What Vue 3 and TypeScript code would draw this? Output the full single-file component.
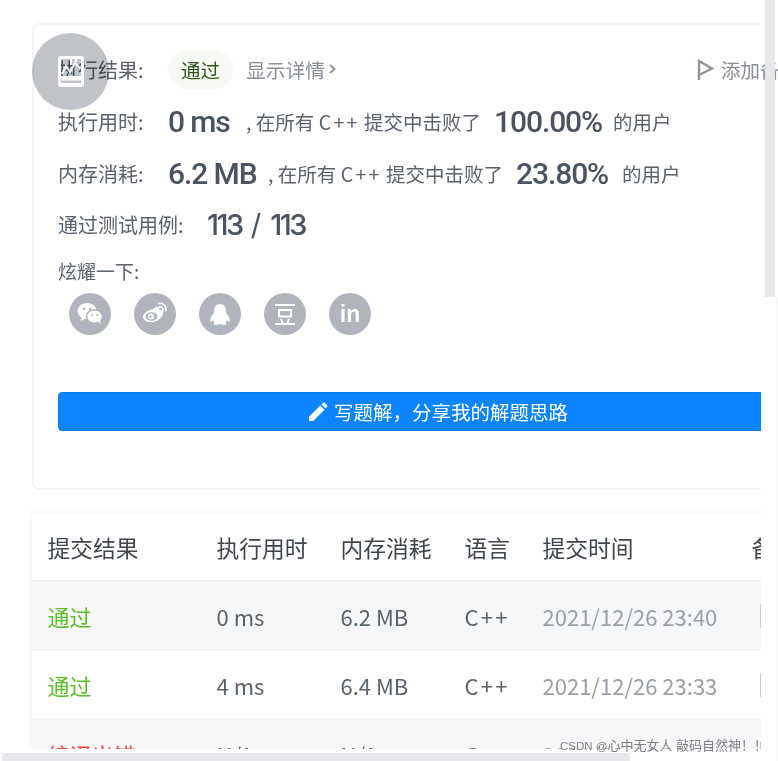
<script setup lang="ts">
interface Row {
  status: string
  ok: boolean
  time: string
  mem: string
  lang: string
  at: string
}
const rows: Row[] = [
  { status: '通过', ok: true, time: '0 ms', mem: '6.2 MB', lang: 'C++', at: '2021/12/26 23:40' },
  { status: '通过', ok: true, time: '4 ms', mem: '6.4 MB', lang: 'C++', at: '2021/12/26 23:33' },
  { status: '编译出错', ok: false, time: 'N/A', mem: 'N/A', lang: 'C++', at: '2021/12/26 23:30' }
]
const stats = [
  { label: '执行用时:', value: '0 ms', valueWidth: 65, pct: '100.00%', pctWidth: 107 },
  { label: '内存消耗:', value: '6.2 MB', valueWidth: 87, pct: '23.80%', pctWidth: 94 }
]
</script>

<template>
  <div class="screen">
    <div class="viewport">
      <section class="card">
        <div class="row result">
          <span class="label">执行结果:</span>
          <span class="pill">通过</span>
          <span class="detail">显示详情</span>
          <svg class="chev" width="9" height="14" viewBox="0 0 9 14"><path d="M2 3l4.500 4-4.500 4" fill="none" stroke="#8a9099" stroke-width="1.800" /></svg>
          <span class="add">
            <svg width="17" height="22" viewBox="0 0 17 22"><path d="M2 21V2l13 7.500-13 6.500" fill="none" stroke="#8f959c" stroke-width="2.400" /></svg>
            <span>添加备注</span>
          </span>
        </div>
        <div v-for="s in stats" :key="s.label" class="row stat">
          <span class="label">{{ s.label }}</span>
          <b class="big" :style="{ width: s.valueWidth + 'px' }">{{ s.value }}</b>
          <span class="note">, 在所有 <span class="cpp">C++</span> 提交中击败了</span>
          <b class="big pct" :style="{ width: s.pctWidth + 'px' }">{{ s.pct }}</b>
          <span class="note users">的用户</span>
        </div>
        <div class="row cases">
          <span class="label">通过测试用例:</span>
          <span class="count"><b>113</b><b class="slash">/</b><b>113</b></span>
        </div>
        <div class="share-title">炫耀一下:</div>
        <div class="share">
          <span class="soc">
            <svg width="26" height="24" viewBox="0 0 26 24">
              <ellipse cx="10" cy="9" rx="9.500" ry="8" fill="#fff" />
              <path d="M5 14l-1 5 5-3z" fill="#fff" />
              <ellipse cx="17.500" cy="14.500" rx="8" ry="6.800" fill="#fff" stroke="#b0b4bc" stroke-width="1.500" />
              <path d="M21 19l2.500 3.500-.5-5z" fill="#fff" />
              <circle cx="7" cy="7" r="1.200" fill="#b0b4bc" /><circle cx="13" cy="7" r="1.200" fill="#b0b4bc" />
              <circle cx="15" cy="13" r="1" fill="#b0b4bc" /><circle cx="20.500" cy="13" r="1" fill="#b0b4bc" />
            </svg>
          </span>
          <span class="soc">
            <svg width="28" height="26" viewBox="0 0 28 26">
              <path d="M12 8c2.500-2 5-2.800 6-1.800.7.800.2 2 0 2.800 2.500-.8 4.300.2 4.300 2.200 0 4-5.500 10-12 10C5 21.200 2 18.500 2 15.500 2 13 6 9.500 12 8z" fill="#fff" />
              <ellipse cx="10.500" cy="15.500" rx="6" ry="4.200" fill="#b0b4bc" />
              <circle cx="10" cy="15.500" r="3" fill="#fff" /><circle cx="9.500" cy="15.800" r="1.300" fill="#b0b4bc" />
              <path d="M18 2.500c4.500-.5 7.500 2.500 7 7M18.500 6c2.300-.3 3.700 1.200 3.400 3.500" fill="none" stroke="#fff" stroke-width="1.800" stroke-linecap="round" />
            </svg>
          </span>
          <span class="soc">
            <svg width="22" height="23" viewBox="0 0 22 23">
              <path d="M11 1C6.500 1 5 4.500 5 8v2C3 12 1 15 1.200 18c.3 1.500 1.800.5 2.800-1 .5 1.500 1 2.500 2 3-1.500.5-2 1-1.500 1.500 1.500.5 4.500.5 6.500-.5 2 1 5 1 6.500.5.500-.5 0-1-1.500-1.500 1-.5 1.500-1.500 2-3 1 1.500 2.500 2.500 2.800 1 .2-3-1.800-6-3.800-8V8c0-3.500-1.500-7-6-7z" fill="#fff" />
            </svg>
          </span>
          <span class="soc">
            <svg width="24" height="26" viewBox="0 0 24 26" fill="none" stroke="#fff" stroke-width="2">
              <path d="M2 4h20M6 9h12v6.500H6zM8 18l2 5M16 18l-2 5M2 23h20" />
            </svg>
          </span>
          <span class="soc in">in</span>
        </div>
        <button class="write" type="button">
          <svg width="20" height="20" viewBox="0 0 20 20"><path d="M1 19v-4.200L12.300 3.500l4.200 4.200L5.200 19zM13.500 2.300l1.700-1.500c.5-.4 1-.4 1.400 0l2.500 2.500c.4.400.4 1 0 1.400l-1.500 1.700z" fill="#fff" /></svg>
          <span>写题解，分享我的解题思路</span>
        </button>
      </section>

      <section class="table">
        <div class="tr head">
          <span>提交结果</span><span>执行用时</span><span>内存消耗</span><span>语言</span><span>提交时间</span><span>备注</span>
        </div>
        <div v-for="(r, i) in rows" :key="i" class="tr body" :class="{ odd: i % 2 === 0 }">
          <span :class="r.ok ? 'ok' : 'bad'">{{ r.status }}</span>
          <span>{{ r.time }}</span>
          <span>{{ r.mem }}</span>
          <span class="lang">{{ r.lang }}</span>
          <span class="at">{{ r.at }}</span>
          <span class="memo"></span>
        </div>
      </section>
    </div>

    <div class="fab">
      <svg width="26" height="31" viewBox="0 0 26 31">
        <path fill-rule="evenodd" d="M3 0h20a3 3 0 0 1 3 3v25a3 3 0 0 1-3 3H3a3 3 0 0 1-3-3V3a3 3 0 0 1 3-3zM3 3v17h20V3zM3 24.500V27h20v-2.500z" fill="#fff" />
        <path d="M4 18l4-8 4 6 5-9 5 5M13 3v6M18 3v3" fill="none" stroke="#fff" stroke-width="1.800" />
      </svg>
    </div>
    <div class="vbar"></div>
    <div class="vline"></div>
    <div class="hbar"></div>
    <div class="mark"><span class="mark-id">CSDN @</span>心中无女人 敲码自然神！！</div>
  </div>
</template>

<style>
html, body { margin: 0; background: #fff; }
</style>

<style scoped>
.screen {
  position: relative;
  width: 778px;
  height: 761px;
  overflow: hidden;
  background: #fff;
  font-family: "Noto Sans CJK SC", "Noto Sans", sans-serif;
  color: #5a626e;
}
.viewport {
  width: 761px;
  height: 749px;
  padding: 23px 0 0 32px;
  box-sizing: border-box;
  overflow: hidden;
}
.card {
  width: 800px;
  height: 467px;
  box-sizing: border-box;
  border: 2px solid #f3f4f5;
  border-radius: 7px;
  padding: 23px 0 0 24px;
}
.row {
  display: flex;
  align-items: center;
  white-space: nowrap;
}
.result { height: 42px; }
.stat { height: 52px; }
.stat:nth-child(2) { margin-top: 5px; }
.cases { height: 51px; }
.label { font-size: 20px; width: 110px; flex: none; }
.cases .label { width: 149px; }
.pill {
  font-size: 19.500px;
  height: 39px;
  line-height: 39px;
  padding: 0 13px;
  border-radius: 20px;
  background: #f6faf2;
  color: #2c5a1c;
}
.detail { font-size: 19.750px; color: #8a9099; margin-left: 13px; }
.chev { margin-left: 3px; }
.add {
  position: absolute;
  left: 697px;
  top: 55px;
  display: flex;
  align-items: center;
  gap: 7px;
  font-size: 19.500px;
  color: #8a9099;
}
.big {
  flex: none;
  font-family: Roboto, sans-serif;
  font-weight: 500;
  font-size: 30px;
  letter-spacing: -1.100px;
  color: #4b5460;
}
.count {
  display: flex;
  gap: 9px;
  font-family: Inter, Roboto, sans-serif;
  font-size: 29px;
  letter-spacing: -2.500px;
  color: #4b5460;
}
.count b { font-weight: 500; }
.count .slash { font-weight: 400; letter-spacing: 0; }
.note { font-size: 19.500px; margin-left: 13px; }
.cpp { letter-spacing: 2.300px; }
.pct { margin-left: 13px; }
.users { margin-left: 12px; }
.share-title { font-size: 19px; margin-top: 7px; line-height: 28px; }
.share {
  display: flex;
  gap: 23px;
  padding-left: 11px;
  margin-top: 8px;
}
.soc {
  width: 42px;
  height: 42px;
  border-radius: 50%;
  background: #b0b4bc;
  display: flex;
  align-items: center;
  justify-content: center;
}
.in {
  color: #fff;
  font-family: "Liberation Sans", sans-serif;
  font-weight: 700;
  font-size: 23px;
}
.write {
  display: flex;
  align-items: center;
  justify-content: center;
  gap: 6px;
  width: 760px;
  height: 39px;
  margin-top: 57px;
  padding: 0;
  border: 1px solid #0a7be8;
  border-radius: 4px;
  background: #0a84ff;
  color: #fff;
  font: 19.500px "Noto Sans CJK SC", sans-serif;
}
.table {
  width: 800px;
  margin-top: 24px;
  box-shadow: 0 0 6px rgba(0, 0, 0, 0.07);
  background: #fff;
}
.tr {
  display: grid;
  grid-template-columns: 169px 124px 124px 78px 209px 1fr;
  align-items: center;
  padding-left: 15.500px;
  box-sizing: border-box;
  white-space: nowrap;
}
.head {
  height: 68px;
  font-size: 22.750px;
  color: #3f4650;
  border-bottom: 2px solid #f1f2f3;
}
.body {
  height: 69px;
  font-size: 22px;
  border-bottom: 2px solid #f3f4f5;
}
.odd { background: #f6f7f9; }
.ok { color: #5cbf2a; }
.bad { color: #f5413e; }
.at { color: #9a9fa6; }
.lang { letter-spacing: 2.300px; }
.memo {
  width: 2px;
  height: 24px;
  margin-left: 8px;
  background: #c6c9cd;
}
.fab {
  position: absolute;
  left: 32px;
  top: 33px;
  width: 77px;
  height: 77px;
  border-radius: 50%;
  display: flex;
  align-items: center;
  justify-content: center;
}
.fab::before {
  content: "";
  position: absolute;
  inset: 0;
  border-radius: 50%;
  background: #c0c3c8;
  mix-blend-mode: multiply;
}
.fab svg { position: relative; }
.vbar {
  position: absolute;
  left: 765px;
  top: 0;
  width: 10px;
  height: 297px;
  background: #e6e7ea;
}
.vline {
  position: absolute;
  left: 777px;
  top: 297px;
  width: 1px;
  height: 464px;
  background: #f2f2f3;
}
.hbar {
  position: absolute;
  left: 2px;
  top: 753px;
  width: 628px;
  height: 8px;
  background: #e6e7ea;
}
.mark {
  position: absolute;
  left: 560px;
  top: 735px;
  font-family: "Liberation Sans", "Noto Sans CJK SC", sans-serif;
  font-size: 13px;
  color: #7f8185;
  white-space: nowrap;
  width: 203px;
  overflow: hidden;
}
.mark-id { font-size: 11.500px; }
</style>
